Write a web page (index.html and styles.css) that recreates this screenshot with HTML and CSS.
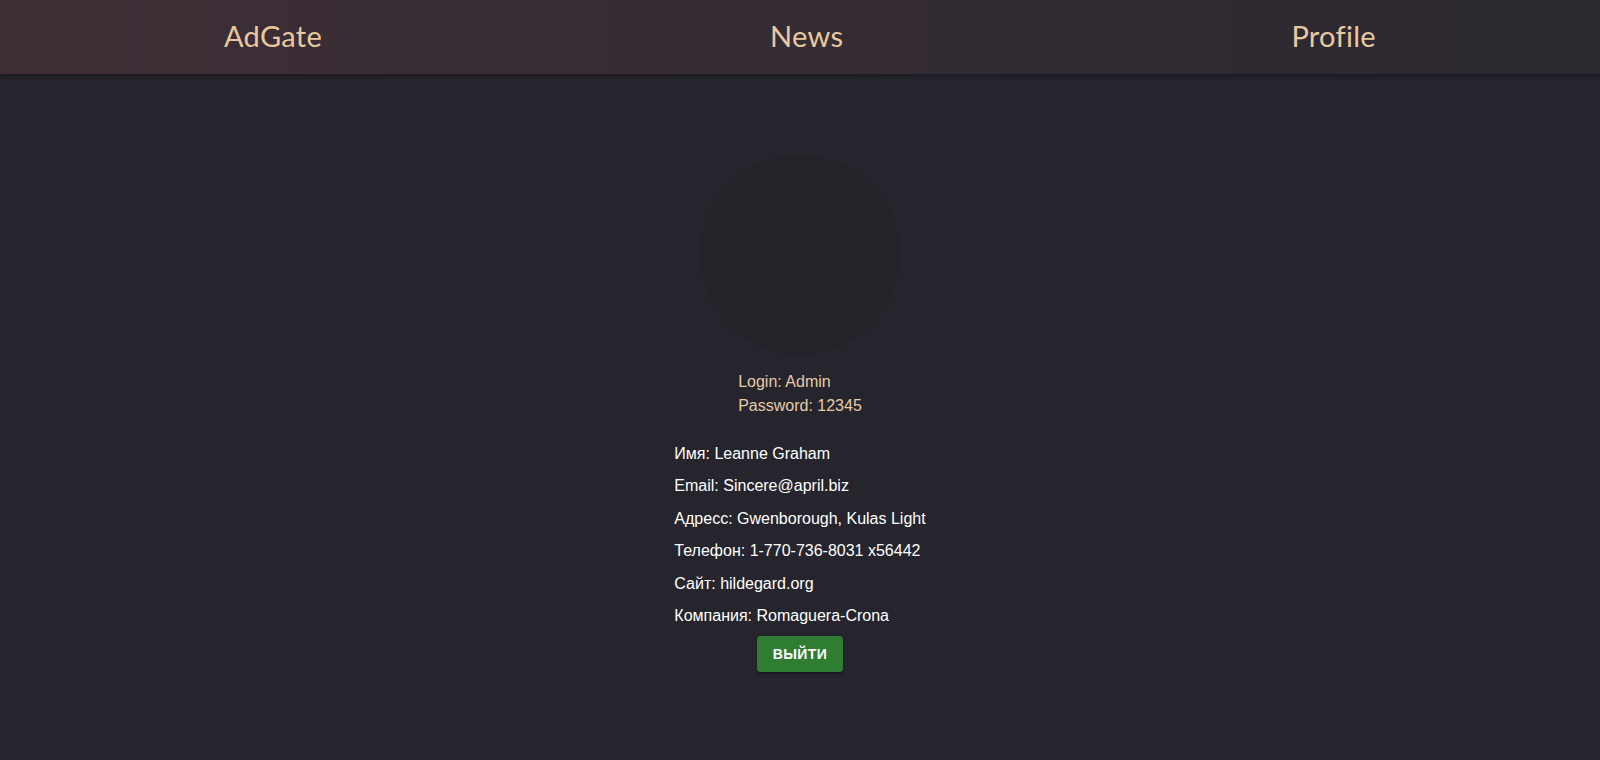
FILE: index.html
```html
<!DOCTYPE html>
<html lang="ru">
<head>
<meta charset="utf-8">
<title>Profile</title>
<link rel="stylesheet" href="styles.css">
</head>
<body>
<header class="header">
  <a class="nav-link">AdGate</a>
  <a class="nav-link">News</a>
  <a class="nav-link">Profile</a>
</header>
<main class="profile">
  <div class="avatar"></div>
  <div class="creds">
    <div class="cred-line">Login: Admin</div>
    <div class="cred-line">Password: 12345</div>
  </div>
  <div class="info">
    <p class="info-line">Имя: Leanne Graham</p>
    <p class="info-line">Email: Sincere@april.biz</p>
    <p class="info-line">Адресс: Gwenborough, Kulas Light</p>
    <p class="info-line">Телефон: 1-770-736-8031 x56442</p>
    <p class="info-line">Сайт: hildegard.org</p>
    <p class="info-line">Компания: Romaguera-Crona</p>
  </div>
  <button class="logout">Выйти</button>
</main>
</body>
</html>
```
FILE: styles.css
```css
html, body {
  margin: 0;
  padding: 0;
  height: 100%;
}
body {
  background: #26252e;
  font-family: "Liberation Sans", Arial, sans-serif;
  color: #ffffff;
}
.header {
  height: 74px;
  box-sizing: border-box;
  padding-bottom: 4px;
  display: flex;
  justify-content: space-around;
  align-items: center;
  background: linear-gradient(90deg, #3d2e35 0%, #362c34 45%, #2b2830 100%);
  box-shadow: 0 2px 5px rgba(0, 0, 0, 0.35);
  position: relative;
}
.nav-link {
  font-family: Lato, "Open Sans", sans-serif;
  font-size: 29px;
  color: #e8c8a0;
  text-decoration: none;
  line-height: 1;
  letter-spacing: 0.3px;
}
.profile {
  display: flex;
  flex-direction: column;
  align-items: center;
  padding-top: 81px;
}
.avatar {
  width: 200px;
  height: 200px;
  border-radius: 50%;
  background: #242328;
}
.creds {
  margin-top: 15px;
  display: flex;
  flex-direction: column;
  font-size: 16px;
  line-height: 24px;
  color: #e6cba8;
}
.info {
  margin-top: 27px;
  display: flex;
  flex-direction: column;
  gap: 14px;
}
.info-line {
  margin: 0;
  font-size: 16px;
  line-height: 18.4px;
  color: #ffffff;
}
.logout {
  margin-top: 11px;
  width: 86px;
  height: 36px;
  border: none;
  border-radius: 4px;
  background: #2e7d32;
  color: #ffffff;
  font-family: "Liberation Sans", Arial, sans-serif;
  font-weight: 700;
  font-size: 14px;
  text-transform: uppercase;
  letter-spacing: 0.4px;
  box-shadow: 0 3px 1px -2px rgba(0,0,0,0.2), 0 2px 2px 0 rgba(0,0,0,0.14), 0 1px 5px 0 rgba(0,0,0,0.12);
  cursor: pointer;
}
```
